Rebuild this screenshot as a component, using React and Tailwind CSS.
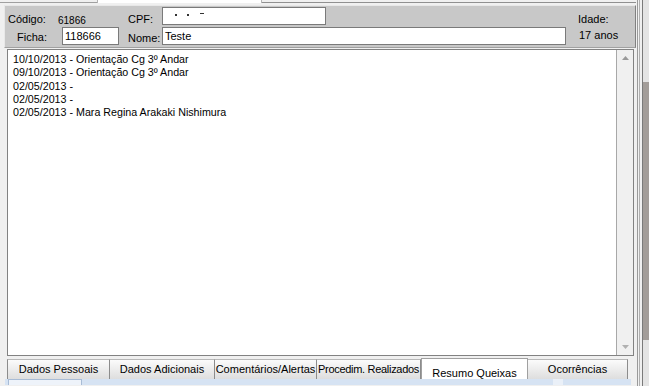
export default function App() {
  const lines = [
    "10/10/2013 - Orientação Cg 3º Andar",
    "09/10/2013 - Orientação Cg 3º Andar",
    "02/05/2013 -",
    "02/05/2013 -",
    "02/05/2013 - Mara Regina Arakaki Nishimura",
  ];
  const tabs = [
    { label: "Dados Pessoais", w: "w-[103px]" },
    { label: "Dados Adicionais", w: "w-[105px]" },
    { label: "Comentários/Alertas", w: "w-[102px]" },
    { label: "Procedim. Realizados", w: "w-[104px]", tight: true },
    { label: "Resumo Queixas", w: "w-[107px]", active: true },
    { label: "Ocorrências", w: "w-[100px]" },
  ];
  return (
    <div className="w-[649px] h-[386px] bg-[#f0f0f0] flex overflow-hidden font-['Liberation_Sans',Arial,sans-serif] text-[11px] text-[#000] leading-[13px]">
      {/* content */}
      <div className="w-[636px] flex flex-col">
        {/* top strip */}
        <div className="h-[5px] flex">
          <div className="w-[97px] h-[3px] border-b border-[#a0a0a0]" />
          <div className="w-[165px] h-[3px] bg-white border-x border-[#b4b4b4]" />
          <div className="flex-1 h-[3px] border-b border-[#909090]" />
        </div>
        {/* header panel */}
        <div className="ml-[4px] w-[632px] h-[43px] bg-[#c8c8c8] border-t border-l border-[#e8e8e8] border-r border-r-[#808080] border-b border-b-[#a0a0a0] flex flex-col">
          <div className="h-[20px] flex items-start">
            <div className="ml-[3px] w-[50px] mt-[7px]">Código:</div>
            <div className="w-[70px] mt-[9px] text-[10px] leading-[12px]">61866</div>
            <div className="w-[34px] mt-[7px]">CPF:</div>
            <div className="w-[164px] h-[18px] mt-[1px] bg-white border border-[#7a7a7a] flex items-start">
              <div className="ml-[12px] mt-[2px] flex items-start gap-[10px]">
                <div className="w-[2px] h-[2px] mt-[4px] bg-[#333]" />
                <div className="w-[2px] h-[2px] mt-[4px] bg-[#333]" />
                <div className="w-[4px] h-[1px] mt-[3px] ml-[1px] bg-[#333]" />
              </div>
            </div>
            <div className="ml-[252px] mt-[7px]">Idade:</div>
          </div>
          <div className="h-[21px] flex items-start">
            <div className="ml-[12px] w-[45px] mt-[5px]">Ficha:</div>
            <div className="w-[57px] h-[18px] mt-[1px] bg-white border border-[#7a7a7a] flex items-center pl-[2px]">118666</div>
            <div className="ml-[9px] w-[34px] mt-[6px]">Nome:</div>
            <div className="w-[404px] h-[18px] mt-[1px] bg-white border border-[#7a7a7a] flex items-center pl-[2px]">Teste</div>
            <div className="ml-[13px] mt-[3px]">17 anos</div>
          </div>
        </div>
        {/* list box */}
        <div className="ml-[7px] mt-[1px] w-[627px] h-[307px] border border-[#828282] bg-white flex">
          <div className="flex-1 border-r border-[#a8a8a8] pt-[3px] pl-[5px] text-[10.7px] leading-[13.33px]">
            {lines.map((l, i) => (
              <div key={i}>{l}</div>
            ))}
          </div>
          <div className="w-[16px] bg-[#f0f0f0] flex flex-col items-center justify-between py-[6px]">
            <svg width="7" height="4" viewBox="0 0 7 4"><path d="M0 4 L3.5 0 L7 4 Z" fill="#9a9a9a" /></svg>
            <svg width="7" height="4" viewBox="0 0 7 4"><path d="M0 0 L3.5 4 L7 0 Z" fill="#b0b0b0" /></svg>
          </div>
        </div>
        {/* tabs */}
        <div className="ml-[7px] mt-[3px] h-[20px] flex items-start">
          {tabs.map((t, i) =>
            t.active ? (
              <div
                key={i}
                className={`${t.w} h-[24px] -mt-[1px] bg-white border-x border-t border-[#a0a0a0] flex items-center justify-center pt-[6px] whitespace-nowrap overflow-hidden`}
              >
                {t.label}
              </div>
            ) : (
              <div
                key={i}
                className={`${t.w} h-[20px] bg-gradient-to-b from-[#fbfbfb] to-[#dedede] border-t border-[#b8b8b8] ${i === 0 ? "border-l border-l-[#8c8c8c]" : ""} border-r border-r-[#8c8c8c] flex items-center justify-center whitespace-nowrap overflow-hidden ${t.tight ? "tracking-[-0.3px]" : ""}`}
              >
                {t.label}
              </div>
            )
          )}
        </div>
        {/* bottom band */}
        <div className="ml-[5px] h-[6px] flex">
          <div className="w-[3px] bg-[#d6e3f3]" />
          <div className="w-[74px] bg-[#eef3fa] border-t border-x border-[#a8bcd6]" />
          <div className="w-[471px] bg-[#d6e3f3]" />
          <div className="w-[10px] bg-[#eaf0f8]" />
          <div className="w-[68px] bg-[#d6e3f3]" />
        </div>
      </div>
      {/* right frame lines */}
      <div className="w-[7px] flex">
        <div className="w-[1px] ml-[1px] bg-[#9a9a9a]" />
        <div className="w-[1px] ml-[1px] bg-[#b0b0b0]" />
        <div className="w-[1px] ml-[2px] bg-[#7a7a7a]" />
      </div>
      {/* outer scrollbar */}
      <div className="w-[6px] bg-[#e4e4e4] flex flex-col">
        <div className="h-[82px]" />
        <div className="h-[258px] bg-[#a39d99]" />
      </div>
    </div>
  );
}
